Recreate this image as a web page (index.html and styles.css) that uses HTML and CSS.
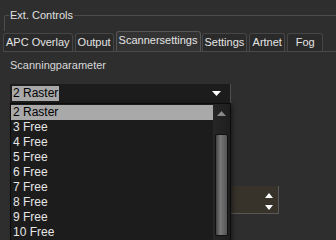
FILE: index.html
```html
<!DOCTYPE html>
<html lang="en">
<head>
    <meta charset="UTF-8">
    <title>Ext. Controls</title>
    <link rel="stylesheet" href="styles.css">
</head>
<body>
    <div class="group">
        <div class="group-head">
            <div class="group-title">Ext. Controls</div>
        </div>

        <!-- Tab bar -->
        <div class="tabs">
            <div class="tab">APC Overlay</div>
            <div class="tab">Output</div>
            <div class="tab active">Scannersettings</div>
            <div class="tab">Settings</div>
            <div class="tab">Artnet</div>
            <div class="tab">Fog</div>
        </div>

        <div class="page">
            <div class="label">Scanningparameter</div>

            <div class="combo-wrap">
                <div class="combo">
                    <span class="combo-text">2&nbsp;Raster</span>
                    <svg class="combo-arrow" width="9" height="5" viewBox="0 0 9 5"><path d="M0 0h9L4.5 5z" fill="#fff"/></svg>
                </div>

                <!-- Open drop list -->
                <div class="popup">
                    <div class="list">
                        <div class="item selected">2&nbsp;Raster</div>
                        <div class="item">3&nbsp;Free</div>
                        <div class="item">4&nbsp;Free</div>
                        <div class="item">5&nbsp;Free</div>
                        <div class="item">6&nbsp;Free</div>
                        <div class="item">7&nbsp;Free</div>
                        <div class="item">8&nbsp;Free</div>
                        <div class="item">9&nbsp;Free</div>
                        <div class="item">10&nbsp;Free</div>
                    </div>
                    <div class="scrollbar">
                        <svg class="sb-arrow" width="9" height="5" viewBox="0 0 9 5"><path d="M4.5 0L9 5H0z" fill="#888"/></svg>
                        <div class="thumb"></div>
                    </div>
                </div>
            </div>

            <div class="spinbox">
                <div class="spin-btns">
                    <svg class="spin-up" width="8" height="5" viewBox="0 0 8 5"><path d="M4 0L8 5H0z" fill="#fff"/></svg>
                    <svg class="spin-down" width="8" height="5" viewBox="0 0 8 5"><path d="M0 0h8L4 5z" fill="#fff"/></svg>
                </div>
            </div>
        </div>
    </div>
</body>
</html>
```

FILE: styles.css
```css
body {
    margin: 0;
    background-color: #2e2e2e;
    font-family: "Liberation Sans", Arial, sans-serif;
    font-size: 11px;
    color: #dcdcdc;
    overflow: hidden;
    height: 240px;
}
.group {
    margin: 15px 0 0 4px;
}
.group-head {
    position: relative;
    height: 15px;
    border-top: 1px solid #4c4c4c;
    border-left: 1px solid #4c4c4c;
    border-top-left-radius: 2px;
}
.group-title {
    position: absolute;
    top: -8px;
    left: 4px;
    padding: 0 1px;
    background-color: #2e2e2e;
    line-height: 14px;
    color: #e0e0e0;
}
.tabs {
    display: flex;
    align-items: flex-end;
    margin-left: -1px;
    border-bottom: 1px solid #4a4a4a;
    height: 20px;
}
.tab {
    flex-shrink: 0;
    white-space: nowrap;
    height: 17px;
    line-height: 17px;
    min-width: 30px;
    text-align: center;
    padding: 0 2px;
    margin-right: 2px;
    border: 1px solid #464646;
    border-bottom: none;
    border-radius: 3px 3px 0 0;
    background-color: #2a2a2a;
    color: #e4e4e4;
}
.tab.active {
    height: 19px;
    line-height: 16px;
    background-color: #333333;
    border-color: #555555;
    margin-right: 1px;
}
.page {
    padding: 6px 0 0 6px;
}
.label {
    line-height: 14px;
    color: #d8d8d8;
}
.combo-wrap {
    position: relative;
    margin-top: 12px;
    width: 221px;
}
.combo {
    height: 19px;
    background-color: #1c1c1c;
    border-right: 1px solid #4e4e4e;
    display: flex;
    align-items: center;
    justify-content: space-between;
    padding: 0 9px 0 2px;
}
.combo-text {
    background-color: #a9a9a9;
    color: #000;
    padding: 0 1px;
    line-height: 15px;
    font-size: 12px;
}
.combo-arrow {
    display: block;
}
.popup {
    position: absolute;
    top: 19px;
    left: 0;
    width: 219px;
    height: 136px;
    background-color: #1c1c1c;
    border: 1px solid #0c0c0c;
    border-bottom: none;
    display: flex;
    box-shadow: 2px 2px 4px rgba(0, 0, 0, 0.4);
    z-index: 2;
}
.list {
    flex: 1;
    padding-top: 1px;
}
.item {
    height: 15px;
    line-height: 15px;
    padding-left: 2px;
    color: #e6e6e6;
    font-size: 12px;
}
.item.selected {
    background-color: #a9a9a9;
    color: #000;
}
.scrollbar {
    width: 17px;
    background: linear-gradient(to right, #262626, #1e1e1e);
    display: flex;
    flex-direction: column;
    align-items: center;
}
.sb-arrow {
    margin-top: 7px;
    display: block;
}
.thumb {
    margin-top: 18px;
    width: 11px;
    height: 100px;
    flex-shrink: 0;
    border: 1px solid #111;
    border-radius: 2px;
    background: linear-gradient(to right, #444, #777 40%, #555);
}
.spinbox {
    margin-top: 83px;
    width: 268px;
    height: 27px;
    background-color: #37322a;
    border-right: 1px solid #585858;
    border-bottom: 1px solid #585858;
    display: flex;
    justify-content: flex-end;
}
.spin-btns {
    padding-right: 5px;
}
.spin-btns svg {
    display: block;
}
.spin-up {
    margin-top: 7px;
}
.spin-down {
    margin-top: 7px;
}
```
